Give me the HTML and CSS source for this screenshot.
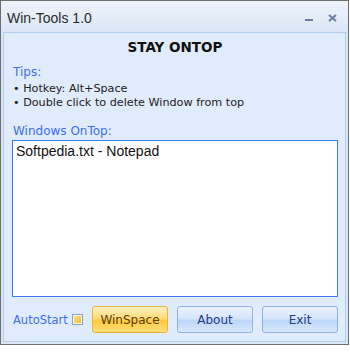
FILE: index.html
```html
<!DOCTYPE html>
<html lang="en">
<head>
    <meta charset="UTF-8">
    <title>Win-Tools 1.0</title>
    <link rel="stylesheet" href="styles.css">
</head>
<body>
    <div class="window">
        <div class="titlebar">
            <span class="title">Win-Tools 1.0</span>
            <div class="controls">
                <span class="ctl-min"></span>
                <svg class="ctl-close" width="9" height="8" viewBox="0 0 9 8">
                    <path d="M1 1 L8 7 M8 1 L1 7" stroke="#6a7ea0" stroke-width="2"/>
                </svg>
            </div>
        </div>

        <div class="panel">
            <h1 class="heading">STAY ONTOP</h1>

            <div class="label">Tips:</div>
            <ul class="tips">
                <li>&bull; Hotkey: Alt+Space</li>
                <li>&bull; Double click to delete Window from top</li>
            </ul>

            <div class="label list-label">Windows OnTop:</div>
            <div class="listbox">
                <div class="list-item">Softpedia.txt - Notepad</div>
            </div>

            <div class="footer">
                <label class="autostart">AutoStart <span class="check"></span></label>
                <button class="btn btn-active">WinSpace</button>
                <button class="btn">About</button>
                <button class="btn">Exit</button>
            </div>
        </div>
    </div>
</body>
</html>
```

FILE: styles.css
```css
* {
    margin: 0;
    padding: 0;
    box-sizing: border-box;
}

body {
    background: #ffffff;
    font-family: 'DejaVu Sans', Verdana, sans-serif;
    font-size: 11.2px;
}

.window {
    width: 349px;
    height: 345px;
    border: 1px solid #6e6e6e;
    background: linear-gradient(#eef3fa, #dbe6f5 31px, #dbe6f5);
    display: flex;
    flex-direction: column;
    padding: 0 2px 2px;
}

.titlebar {
    height: 31px;
    display: flex;
    align-items: center;
    justify-content: space-between;
    padding: 2px 0 0 4px;
}

.title {
    font-family: 'Liberation Sans', Arial, sans-serif;
    font-size: 14px;
    color: #2b2b2b;
}

.controls {
    display: flex;
    align-items: center;
    gap: 15px;
    padding-right: 9px;
}

.ctl-min {
    width: 8px;
    height: 2px;
    background: #6a7ea0;
    margin-top: 5px;
}

.panel {
    flex: 1;
    border: 1px solid #b3cbec;
    background: #e0ebfb;
    padding: 0 7px 0 8px;
    display: flex;
    flex-direction: column;
}

.heading {
    font-size: 13.5px;
    font-weight: bold;
    text-align: center;
    color: #111111;
    margin-top: 6px;
    height: 20px;
}

.label {
    color: #3d6ff5;
    font-size: 12px;
    margin-top: 6px;
    padding-left: 1px;
}

.tips {
    list-style: none;
    color: #222222;
    line-height: 14px;
    margin-top: 3px;
    padding-left: 1px;
}

.list-label {
    margin-top: 14px;
}

.listbox {
    height: 157px;
    margin-top: 2px;
    border: 1px solid #3d7be8;
    background: #ffffff;
    padding: 2px 3px;
}

.list-item {
    font-family: 'Liberation Sans', Arial, sans-serif;
    font-size: 14px;
    color: #111111;
}

.footer {
    display: flex;
    align-items: center;
    margin-top: 9px;
    gap: 9px;
}

.autostart {
    width: 71px;
    display: flex;
    align-items: center;
    gap: 4px;
    color: #3d6ff5;
    font-size: 11.5px;
    padding-left: 1px;
}

.check {
    width: 11px;
    height: 11px;
    border: 1px solid #7ea5e4;
    background: linear-gradient(135deg, #ffe28a, #f6b73c);
    box-shadow: inset 0 0 0 1px #fff3c8;
}

.btn {
    width: 76px;
    height: 27px;
    border: 1px solid #8fb1e3;
    border-radius: 3px;
    background: linear-gradient(#eaf2fd, #d6e6fb 45%, #bcd6f7 55%, #d8e8fc);
    color: #1e3b8a;
    font-family: 'DejaVu Sans', Verdana, sans-serif;
    font-size: 12px;
}

.btn-active {
    border-color: #e7b23e;
    background: linear-gradient(#fff1c4, #ffdc78 45%, #ffcb3d 55%, #ffe07a);
    color: #5b3a0c;
}
```
